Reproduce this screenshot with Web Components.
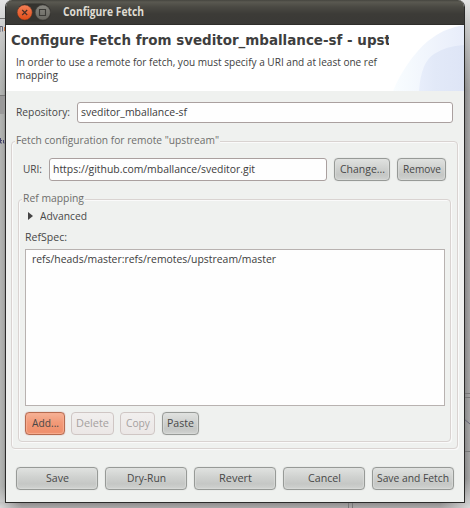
<!DOCTYPE html>
<html lang="en"><head><meta charset="utf-8"><title>Configure Fetch</title>
<style>
html,body{margin:0;width:470px;height:508px;overflow:hidden}
body{position:relative;background:#aaa;font:11.6px/14px "Open Sans","Noto Sans",sans-serif;color:#484848}
.row{display:flex;align-items:center}
.row fit-text,group-box>[slot=label],[slot=line]{transform:translateY(-1px)}
</style></head><body>
<desk-backdrop></desk-backdrop>
<app-window>
  <title-bar slot="bar"><fit-text w="81">Configure Fetch</fit-text></title-bar>
  <dialog-header slot="head">
    <fit-text slot="title" w="380">Configure Fetch from sveditor_mballance-sf - upst</fit-text>
    <fit-text slot="line" w="361">In order to use a remote for fetch, you must specify a URI and at least one ref</fit-text>
    <fit-text slot="line" w="42">mapping</fit-text>
  </dialog-header>
  <div class="row" style="margin:11px 0 0 10px;height:21px"><fit-text w="54">Repository:</fit-text><text-field style="margin-left:7px;width:376px;height:21px"><fit-text w="106">sveditor_mballance-sf</fit-text></text-field></div>
  <group-box style="margin:18px 0 0 5px;width:447px;height:308px">
    <fit-text slot="label" w="203">Fetch configuration for remote "upstream"</fit-text>
    <div class="row" style="margin:2px 0 0 11px;height:23px"><fit-text w="19">URI:</fit-text><text-field style="margin-left:7px;width:278px;height:23px"><fit-text w="202">https://github.com/mballance/sveditor.git</fit-text></text-field>
    <push-button style="margin-left:7px;width:56px"><fit-text w="45">Change...</fit-text></push-button><push-button style="margin-left:7px;width:49px"><fit-text w="38">Remove</fit-text></push-button></div>
    <group-box style="margin:18px 0 0 6px;width:433px;height:243px">
      <fit-text slot="label" w="61">Ref mapping</fit-text>
      <tree-toggle><fit-text w="47">Advanced</fit-text></tree-toggle>
      <fit-text w="42" style="margin:7px 0 0 6px">RefSpec:</fit-text>
      <list-box><fit-text w="244">refs/heads/master:refs/remotes/upstream/master</fit-text></list-box>
      <div class="row" style="margin:6px 0 0 6px;height:23px">
        <push-button kind="hot" style="width:40px"><fit-text w="27">Add...</fit-text></push-button>
        <push-button kind="off" style="width:43px;margin-left:6px"><fit-text w="33">Delete</fit-text></push-button>
        <push-button kind="off" style="width:35px;margin-left:6px"><fit-text w="24">Copy</fit-text></push-button>
        <push-button style="width:37px;margin-left:7px"><fit-text w="27">Paste</fit-text></push-button>
      </div>
    </group-box>
  </group-box>
  <div class="row" style="margin:18px 0 0 10px;gap:7px">
    <push-button style="width:82px"><fit-text w="23">Save</fit-text></push-button>
    <push-button style="width:82px"><fit-text w="39">Dry-Run</fit-text></push-button>
    <push-button style="width:82px"><fit-text w="33">Revert</fit-text></push-button>
    <push-button style="width:82px"><fit-text w="33">Cancel</fit-text></push-button>
    <push-button style="width:82px"><fit-text w="72">Save and Fetch</fit-text></push-button>
  </div>
</app-window>
<script>
const define=(name,html,ready)=>customElements.define(name,class extends HTMLElement{
  connectedCallback(){
    if(!this.shadowRoot)this.attachShadow({mode:'open'}).innerHTML=html;
    if(ready)ready(this);
  }
});
define('desk-backdrop',`<style>:host{position:absolute;inset:0}svg{display:block}</style>
<svg width="470" height="508"><defs>
<linearGradient id="l"><stop offset="0" stop-color="#b4b6b4"/><stop offset=".6" stop-color="#a8aaa8"/><stop offset="1" stop-color="#858585"/></linearGradient>
<linearGradient id="r"><stop offset="0" stop-color="#858585"/><stop offset="1" stop-color="#a5a5a5"/></linearGradient>
<linearGradient id="t" x2="0" y2="1"><stop offset="0" stop-color="#e4e4e4"/><stop offset="1" stop-color="#c4c4c4" stop-opacity="0"/></linearGradient>
<linearGradient id="b" x2="0" y2="1"><stop offset="0" stop-color="#8b8989"/><stop offset="1" stop-color="#aaa8a8"/></linearGradient>
<radialGradient id="c"><stop offset="0" stop-color="#d8d8d8"/><stop offset="1" stop-color="#c8c8c8" stop-opacity="0"/></radialGradient></defs>
<path fill="url(#l)" d="M0 0h6v508H0z"/><path fill="url(#r)" d="M464 0h6v508h-6z"/>
<path fill="url(#t)" d="M0 0h470v90H0z"/><path fill="url(#b)" d="M0 502h470v6H0z"/>
<circle cx="0" cy="508" r="22" fill="url(#c)"/><circle cx="470" cy="508" r="30" fill="url(#c)"/>
<path d="M0 18.500h6M0 95.500h5M464 393.500h6M464 397.500h6M464 451.500h6M348.500 502v6M352.500 502v6" stroke="#777" fill="none"/>
<path d="M464 419l6 5" stroke="#667" fill="none"/><path fill="#999" d="M0 96h5v18H0z"/>
<path d="M0 26.500h2.500v5M0 27v5" stroke="#667" fill="none"/><path d="M4.500 27v4" stroke="#c87a4a"/>
<path d="M.5 138v5h1.500M0 140.500h2M3.500 140v3h1" stroke="#44446a" fill="none"/></svg>`);
define('app-window',`<style>:host{position:absolute;box-sizing:border-box;left:5px;top:0;width:460px;height:503px;border:solid #2b2b2a;border-width:0 1px 1px;border-radius:7px 7px 0 0;background:#eff1ef;overflow:hidden;display:flex;flex-direction:column}</style><slot name="bar"></slot><slot name="head"></slot><slot></slot>`);
define('title-bar',`<style>:host{display:flex;flex:none;align-items:center;box-sizing:border-box;height:25px;padding-left:11px;background:linear-gradient(#45453f 0,#5a5951 2px,#4a4943 7px,#3c3b37 14px,#3a3936);color:#dfdbd2;font-weight:700;border-bottom:1px solid #2f2e2b}
svg{margin-right:12px;flex:none}</style>
<svg width="34" height="20" viewBox="0 0 34 20"><defs><linearGradient id="o" x2="0" y2="1"><stop stop-color="#f58158"/><stop offset="1" stop-color="#df4b16"/></linearGradient><linearGradient id="g" x2="0" y2="1"><stop stop-color="#888780"/><stop offset="1" stop-color="#686761"/></linearGradient></defs>
<rect width="34" height="18" y="1.500" rx="9" fill="#34332f"/><circle cx="7.700" cy="10.500" r="7.500" fill="url(#o)" stroke="#6f3b29" stroke-width=".5"/><path d="M5.200 8l5 5M10.200 8l-5 5" stroke="#493027" stroke-width="1.200"/>
<circle cx="25.800" cy="10.500" r="7.500" fill="url(#g)" stroke="#42413d" stroke-width=".5"/><path d="M22.500 7.500h6v6h-6z" fill="none" stroke="#3b3a36" stroke-width="1.100"/></svg><slot></slot>`);
define('dialog-header',`<style>:host{position:relative;flex:none;display:block;height:66px;background:#fff;overflow:hidden;color:#3e3e3e}
svg{position:absolute;right:0;top:0}.t{position:relative;width:378px;margin-left:5px;padding-top:5px;height:21px;overflow:hidden;white-space:nowrap;font:bold 14px/21px "DejaVu Sans",sans-serif}.p{position:relative;margin:5px 0 0 10px;line-height:13px}</style>
<svg width="80" height="66"><defs><linearGradient id="a"><stop stop-color="#f9fdff"/><stop offset="1" stop-color="#e8edfa"/></linearGradient><linearGradient id="i"><stop stop-color="#e8eefb"/><stop offset=".35" stop-color="#e2e9f8"/><stop offset="1" stop-color="#dee5f6"/></linearGradient></defs>
<path d="M9 66C16 48 30 28 44 16Q60 3 80 0v66z" fill="url(#a)"/><path d="M35 66Q37 37 50 29 62 21 80 20v46z" fill="url(#i)"/></svg>
<div class="t"><slot name="title"></slot></div><div class="p"><slot name="line"></slot></div>`);
define('text-field',`<style>:host{box-sizing:border-box;display:flex;align-items:center;flex:none;border:1px solid #aaa09f;border-radius:3px;background:#fefefe;padding-left:3px;color:#3c3c3c}</style><slot></slot>`);
define('push-button',`<style>:host{box-sizing:border-box;display:flex;align-items:center;justify-content:center;flex:none;height:23px;border:1px solid #979a97;border-radius:4px;background:linear-gradient(#e0e2e0,#cfd1cf 45%,#c5c7c5 75%,#d0d2d0);box-shadow:inset 0 0 1px 1px #dfe1df88,0 0 1px #bbb}
:host([kind=hot]){border-color:#b56c50;background:linear-gradient(#f5b297,#f29a78 45%,#ee8e6b);box-shadow:inset 0 0 1px 1px #f8ad91,0 0 1px #b66}
:host([kind=off]){border-color:#cfc6c4;background:linear-gradient(#f1efee,#ebe7e6);box-shadow:none;color:#a5a19f}</style><slot></slot>`);
define('group-box',`<style>:host{box-sizing:border-box;display:flex;flex-direction:column;flex:none;border:1px solid #d9d3d1;border-radius:4px;box-shadow:inset 1px 1px #fafafa,1px 1px #fafafa}
.l{align-self:flex-start;margin:-9px 0 0 3px;height:23px;color:#6e6e6c}.l span{display:block;height:16px;line-height:16px;background:#eff1ef;padding:0 1px}</style><div class="l"><span><slot name="label"></slot></span></div><slot></slot>`);
define('tree-toggle',`<style>:host{display:flex;align-items:center;height:14px;margin:-5px 0 0 9px}svg{margin-right:7px}</style><svg width="5" height="8"><path d="M0 0l5 4-5 4z" fill="#444"/></svg><slot></slot>`);
define('list-box',`<style>:host{box-sizing:border-box;display:block;flex:none;margin:5px 0 0 6px;width:420px;height:157px;border:1px solid #b8b2b0;background:#fefefe;padding:2px 6px;color:#3c3c3c}</style><slot></slot>`);
define('fit-text',`<style>:host{display:block;white-space:nowrap;flex:none;position:relative}span{display:inline-block;white-space:nowrap;transform-origin:0 50%}:host(:not([slot=title])) span{margin-top:-1px}</style><span><slot></slot></span>`,el=>{
  const s=el.shadowRoot.querySelector('span'),w=+el.getAttribute('w');
  el.fit=()=>{s.style.transform='scaleX('+w/s.getBoundingClientRect().width+')';el.style.width=w+'px'};
});
document.querySelectorAll('fit-text').forEach(e=>e.fit());
</script></body></html>
